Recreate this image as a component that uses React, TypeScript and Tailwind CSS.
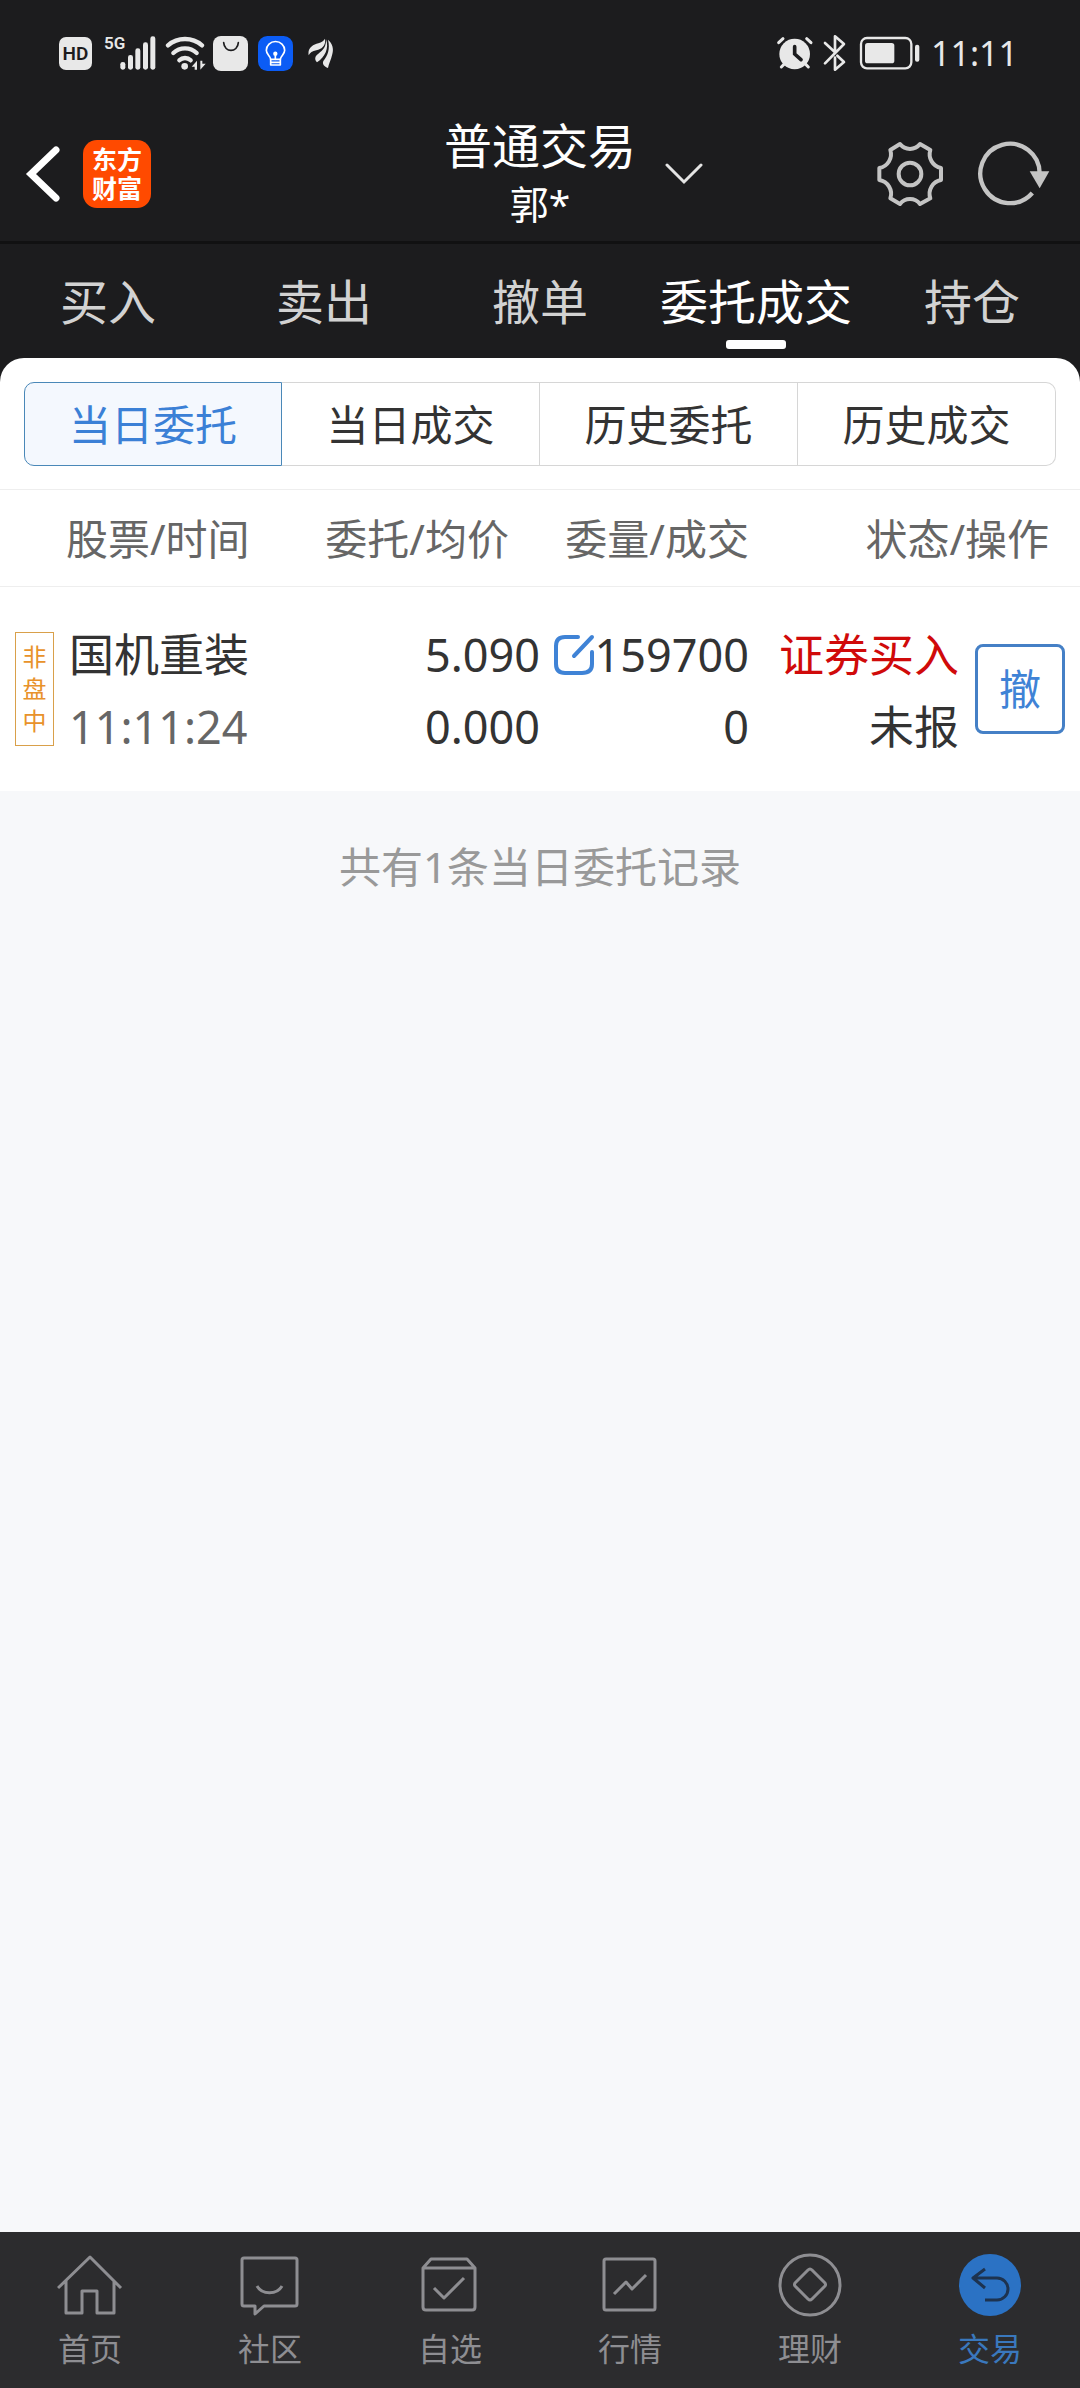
import { useState } from "react";
import type { ReactNode } from "react";

const tabs = ["买入", "卖出", "撤单", "委托成交", "持仓"];
const segments = ["当日委托", "当日成交", "历史委托", "历史成交"];

function StatusBar() {
  return (
    <div className="flex h-[106px] items-center pl-[59px] pr-[62px] text-[#e8e8e8]">
      <div className="flex flex-1 items-center">
        <span className="flex h-[33px] w-[33px] items-center justify-center rounded-[7px] bg-[#e8e8e8] font-['Roboto'] text-[19px] font-semibold leading-none text-[#1c1c1e]">
          HD
        </span>
        <span className="ml-3 h-[36px] w-[20px] font-['Roboto'] text-[17px] font-semibold leading-none">5G</span>
        <svg className="-ml-[4px] h-[35px] w-[36px]" viewBox="242 47 108 105" fill="currentColor" aria-hidden="true">
          <rect x="243" y="125" width="15" height="23" rx="7" />
          <rect x="266" y="104" width="15" height="44" rx="7" />
          <rect x="288" y="84" width="15" height="64" rx="7" />
          <rect x="311" y="66" width="15" height="82" rx="7" />
          <rect x="333" y="48" width="15" height="100" rx="7" />
        </svg>
        <svg className="ml-[9px] h-[35px] w-[42px]" viewBox="377 46 126 105" fill="none" stroke="currentColor" strokeWidth="13" strokeLinecap="round" aria-hidden="true">
          <path d="M386 74A78 78 0 0 1 488 74" />
          <path d="M402 97A51 51 0 0 1 472 97" />
          <path d="M420 119A24 24 0 0 1 454 119" />
          <circle cx="436" cy="137" r="10" fill="currentColor" stroke="none" />
          <path d="M457 138L473 120V147H466V138ZM483 147V120H489V129H499Z" fill="currentColor" stroke="none" />
        </svg>
        <svg className="ml-[6px] h-[35px] w-[35px]" viewBox="522 48 105 105" aria-hidden="true">
          <rect x="522" y="48" width="105" height="105" rx="24" fill="#e8e8e8" />
          <path d="M554 68C556 99 596 99 598 68" fill="none" stroke="#1c1c1e" strokeWidth="5" strokeLinecap="round" />
        </svg>
        <svg className="ml-[10px] h-[35px] w-[35px]" viewBox="657 48 105 105" fill="none" aria-hidden="true">
          <rect x="657" y="48" width="105" height="105" rx="28" fill="#0b5cf5" />
          <g stroke="#fff" strokeWidth="5" strokeLinecap="round" strokeLinejoin="round">
            <path d="M695 118C694 108 682 104 682 91A27 26 0 0 1 737 91C737 104 725 108 724 118Z" />
            <path d="M695 118V135H724V118M695 127H724M709 102V118" />
            <circle cx="709" cy="101" r="4" fill="#fff" />
          </g>
        </svg>
        <svg className="ml-[15px] h-[31px] w-[26px]" viewBox="807 54 78 93" fill="currentColor" aria-hidden="true">
          <path d="M809 106C805 84 822 74 838 70C848 67 854 62 858 56C861 76 850 87 832 91C820 94 813 98 809 106Z" />
          <path d="M861 58C871 84 858 112 834 127C826 118 827 109 838 101C852 91 862 80 861 58Z" />
          <path d="M867 59C880 70 885 86 880 102C876 120 869 132 867 144C856 140 849 133 853 123C866 106 874 88 867 59Z" />
        </svg>
      </div>
      <svg className="h-[36px] w-[38px]" viewBox="56 47 114 108" fill="none" stroke="currentColor" strokeWidth="9" strokeLinecap="round" aria-hidden="true">
        <circle cx="112" cy="104" r="46" fill="currentColor" stroke="none" />
        <path d="M64 70L77 58M148 58L161 70M72 143L82 133M143 133L153 143" />
        <path d="M112 82V104L131 121" stroke="#1c1c1e" strokeWidth="11" />
      </svg>
      <svg className="ml-[9px] h-[38px] w-[24px]" viewBox="200 43 72 114" fill="none" stroke="currentColor" strokeWidth="8" strokeLinecap="round" strokeLinejoin="round" aria-hidden="true">
        <path d="M206 70L236 98V50L263 73L206 131M236 114V150L263 127L243 108" />
      </svg>
      <svg className="ml-[12px] h-[34px] w-[62px]" viewBox="306 49 186 102" aria-hidden="true">
        <rect x="312" y="55" width="151" height="91" rx="18" fill="none" stroke="currentColor" strokeWidth="7" />
        <rect x="324" y="70" width="88" height="61" rx="8" fill="currentColor" />
        <rect x="474" y="75" width="13" height="51" rx="6" fill="currentColor" />
      </svg>
      <span className="ml-[10px] text-[34px] leading-none">11:11</span>
    </div>
  );
}

function TitleBar() {
  return (
    <header className="grid h-[138px] grid-cols-[1fr_auto_1fr] items-center border-b-[3px] border-[#111112] text-white">
      <div className="flex items-center pl-[25px]">
        <button aria-label="返回">
          <svg className="h-[58px] w-[36px]" viewBox="0 0 36 58" fill="none" stroke="currentColor" strokeWidth="7" strokeLinecap="round" aria-hidden="true">
            <path d="M31 5L6 29L31 53" strokeLinejoin="miter" />
          </svg>
        </button>
        <a href="#home" className="ml-[22px] flex h-[68px] w-[68px] items-center justify-center rounded-[14px] bg-[#ff4a00] text-white">
          <span className="w-[50px] break-all text-[25px] font-bold leading-[29px]">东方财富</span>
        </a>
      </div>
      <div className="flex flex-col items-center">
        <h1 className="text-[48px] leading-[60px]">普通交易</h1>
        <p className="text-[39px] leading-[56px]">郭*</p>
      </div>
      <div className="flex items-center justify-between pl-[28px] pr-[28px] text-[#c4c4c4]">
        <button aria-label="切换账户" className="text-[#e4e4e4]">
          <svg className="h-[22px] w-[40px]" viewBox="0 0 40 22" fill="none" stroke="currentColor" strokeWidth="3" strokeLinecap="round" aria-hidden="true">
            <path d="M3 2L20 19L37 2" />
          </svg>
        </button>
        <div className="flex items-center">
          <button aria-label="设置">
            <svg className="h-[68px] w-[70px]" viewBox="106 86 210 204" fill="none" stroke="currentColor" strokeWidth="12" aria-hidden="true">
              <path d="M181 98A38 38 0 0 0 241 98L272 116A42 42 0 0 0 304 170V206A42 42 0 0 0 272 261L241 278A38 38 0 0 0 181 278L152 261A42 42 0 0 0 119 206V170A42 42 0 0 0 152 116Z" strokeLinejoin="round" />
              <circle cx="211" cy="188" r="34" />
            </svg>
          </button>
          <button aria-label="刷新" className="ml-[31px]">
            <svg className="h-[68px] w-[76px]" viewBox="410 86 228 204" fill="none" stroke="currentColor" strokeWidth="13" aria-hidden="true">
              <path d="M579 245A89 89 0 1 1 601 188" />
              <path d="M571 180H630L601 231Z" fill="currentColor" stroke="none" />
            </svg>
          </button>
        </div>
      </div>
    </header>
  );
}

function OrderTable() {
  return (
    <table className="w-full table-fixed border-collapse bg-white">
      <colgroup>
        <col className="w-[28%]" />
        <col className="w-[22%]" />
        <col className="w-[20%]" />
        <col className="w-[30%]" />
      </colgroup>
      <thead>
        <tr className="h-[97px] border-y border-[#eeeeee] text-[42px] text-[#666666]">
          <th className="whitespace-nowrap pl-[66px] text-left font-normal">股票/时间</th>
          <th className="whitespace-nowrap pr-[31px] text-right font-normal">委托/均价</th>
          <th className="whitespace-nowrap pr-[7px] text-right font-normal">委量/成交</th>
          <th className="whitespace-nowrap pr-[31px] text-right font-normal">状态/操作</th>
        </tr>
      </thead>
      <tbody>
        <tr className="h-[204px] whitespace-nowrap text-[45px] leading-[72px] text-[#333333]">
          <td className="pl-[15px]">
            <div className="flex items-center">
              <span className="flex h-[114px] w-[39px] shrink-0 flex-col items-center justify-center border border-[#d9a04a] text-[24px] leading-[32px] text-[#e8922a]">
                <span>非</span>
                <span>盘</span>
                <span>中</span>
              </span>
              <div className="ml-[15px] pt-1">
                <div>国机重装</div>
                <div className="text-[#666666]">11:11:24</div>
              </div>
            </div>
          </td>
          <td className="pt-1 text-right">
            <div>5.090</div>
            <div>0.000</div>
          </td>
          <td className="pr-[7px] pt-1 text-right">
            <div className="flex items-center justify-end">
              <button aria-label="修改委托" className="text-[#3f83d6]">
                <svg className="h-[42px] w-[42px]" viewBox="552 152 42 42" fill="none" stroke="currentColor" strokeWidth="4" strokeLinecap="round" aria-hidden="true">
                  <path d="M577 155H564Q555 155 555 164V182Q555 191 564 191H581Q591 191 591 182V170M573 174L591 155" />
                </svg>
              </button>
              <span>159700</span>
            </div>
            <div>0</div>
          </td>
          <td className="pr-[15px]">
            <div className="flex items-center justify-end">
              <div className="pt-1 text-right">
                <div className="text-[#d00a0a]">证券买入</div>
                <div>未报</div>
              </div>
              <button className="ml-[16px] h-[90px] w-[90px] rounded-[8px] border-[3px] border-[#4580c6] text-[42px] text-[#3f83d6]">
                撤
              </button>
            </div>
          </td>
        </tr>
      </tbody>
    </table>
  );
}

type NavItem = { label: string; viewBox: string; icon: ReactNode };

const navItems: NavItem[] = [
  {
    label: "首页",
    viewBox: "57 32 66 66",
    icon: <path d="M58 68L90 37L121 68M66 61V93H82V71H97V93H114V61" />,
  },
  {
    label: "社区",
    viewBox: "237 32 66 66",
    icon: (
      <path d="M244 38H295Q297 38 297 40V84Q297 86 295 86H264L255 94V86H244Q242 86 242 84V40Q242 38 244 38ZM257 66C262 75 277 75 282 66" />
    ),
  },
  {
    label: "自选",
    viewBox: "417 32 66 66",
    icon: <path d="M423 48L431 39H467L475 48V87Q475 90 472 90H426Q423 90 423 87ZM423 48H475M434 68L444 78L464 58" />,
  },
  {
    label: "行情",
    viewBox: "57 32 66 66",
    icon: (
      <>
        <rect x="64" y="39" width="51" height="51" rx="2" />
        <path d="M74 74L86 62L92 69L106 55" />
      </>
    ),
  },
  {
    label: "理财",
    viewBox: "237 32 66 66",
    icon: (
      <>
        <circle cx="270" cy="65" r="30" />
        <path d="M268 50Q270 48 272 50L285 63Q286 65 285 66L272 79Q270 81 268 79L255 66Q254 65 255 63Z" />
      </>
    ),
  },
  {
    label: "交易",
    viewBox: "417 32 66 66",
    icon: (
      <>
        <circle cx="450" cy="65" r="31" fill="#2b72c4" stroke="none" />
        <path d="M445 49L433 58L445 68M434 58H457A11 11 0 0 1 457 80H445" stroke="#1d3350" strokeWidth="3" />
      </>
    ),
  },
];

function BottomNav() {
  return (
    <nav className="grid h-[156px] grid-cols-6 bg-[#2c2c2e]">
      {navItems.map((item) => (
        <a
          key={item.label}
          href={`#${item.label}`}
          className={
            item.label === "交易"
              ? "flex flex-col items-center pt-5 text-[#3a78bd]"
              : "flex flex-col items-center pt-5 text-[#8e8e92]"
          }
        >
          <svg className="h-[66px] w-[66px]" viewBox={item.viewBox} fill="none" stroke="currentColor" strokeWidth="3" strokeLinejoin="round" aria-hidden="true">
            {item.icon}
          </svg>
          <span className="mt-[10px] text-[32px] leading-[42px]">{item.label}</span>
        </a>
      ))}
    </nav>
  );
}

export default function App() {
  const [tab, setTab] = useState("委托成交");
  const [segment, setSegment] = useState("当日委托");

  return (
    <div className="flex min-h-screen flex-col bg-[#f7f8fa] font-['Noto_Sans','Noto_Sans_CJK_SC',sans-serif]">
      <div className="bg-[#1c1c1e]">
        <StatusBar />
        <TitleBar />
        <nav className="grid grid-cols-5">
          {tabs.map((name) => (
            <button key={name} onClick={() => setTab(name)} className="flex h-[114px] flex-col items-center pt-[22px]">
              <span className={name === tab ? "text-[48px] leading-[72px] text-white" : "text-[48px] leading-[72px] text-[#d2d2d2]"}>
                {name}
              </span>
              {name === tab && <span className="mt-[2px] h-[9px] w-[60px] rounded-[3px] bg-white" />}
            </button>
          ))}
        </nav>
        <div className="rounded-t-[24px] bg-white px-6 pb-[23px] pt-6">
          <div className="grid h-[84px] grid-cols-4">
            {segments.map((name) => (
              <button
                key={name}
                onClick={() => setSegment(name)}
                className={
                  name === segment
                    ? "border border-[#4a88b8] bg-[#f4f8fe] text-[42px] text-[#3b80d6] first:rounded-l-[10px] last:rounded-r-[10px]"
                    : "border-y border-r border-[#d6d6d6] text-[42px] text-[#333333] first:rounded-l-[10px] first:border-l last:rounded-r-[10px]"
                }
              >
                {name}
              </button>
            ))}
          </div>
        </div>
      </div>
      <main className="flex-1">
        <OrderTable />
        <p className="pt-[46px] text-center text-[42px] leading-[60px] text-[#999999]">共有1条当日委托记录</p>
      </main>
      <BottomNav />
    </div>
  );
}
